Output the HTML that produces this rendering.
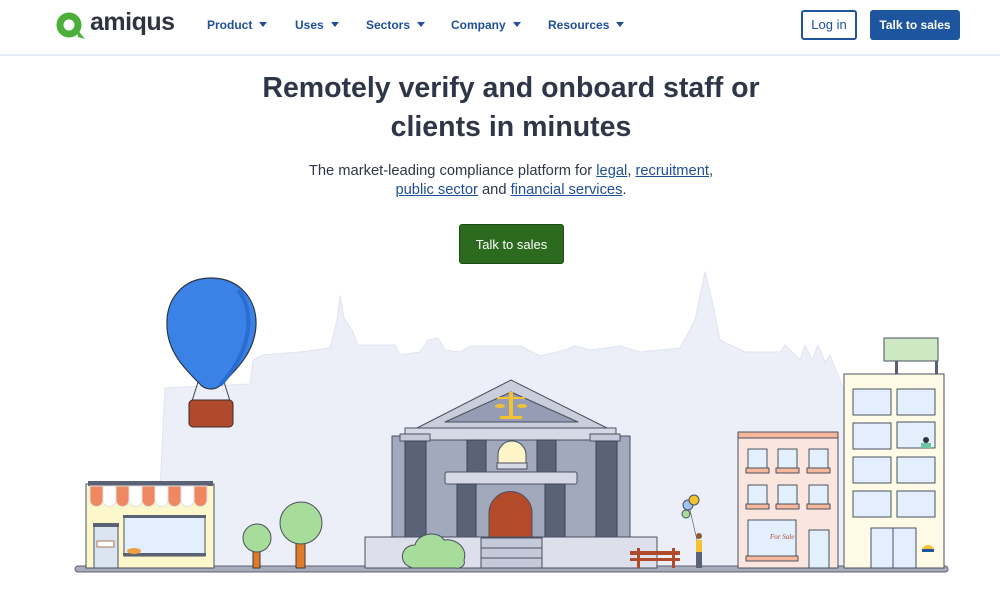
<!DOCTYPE html>
<html><head><meta charset="utf-8"><style>
*{margin:0;padding:0;box-sizing:border-box}
body{width:1000px;height:613px;overflow:hidden;background:#fff;font-family:"Liberation Sans",sans-serif;position:relative}
.hdr{position:absolute;left:0;top:0;width:1000px;height:56px;border-bottom:2px solid #e6edf7;background:#fff}
.nav{position:absolute;top:18px;font-size:12px;font-weight:bold;color:#1f4f99}
.nav i{display:inline-block;width:0;height:0;border-left:4px solid transparent;border-right:4px solid transparent;border-top:5px solid #1f4f99;margin-left:7px;vertical-align:2px}
.btn{position:absolute;font-size:12px;font-weight:bold;text-align:center;border-radius:3px}
h1{position:absolute;left:11px;width:1000px;top:69px;text-align:center;font-size:28.5px;line-height:39px;color:#2e3648;font-weight:bold}
.sub{position:absolute;left:11px;width:1000px;top:162px;text-align:center;font-size:14.7px;line-height:18.5px;color:#2e3648}
.sub a{color:#1f4f99;text-decoration:underline}
</style></head><body>
<div class="hdr">
<svg style="position:absolute;left:56px;top:11px" width="30" height="30" viewBox="0 0 30 30"><circle cx="13" cy="14" r="9" fill="none" stroke="#4caf3a" stroke-width="7"/><path d="M20 14 L22 26 L29 28 L24 22Z" fill="#4caf3a"/></svg>
<div style="position:absolute;left:90px;top:8px;font-size:25px;font-weight:bold;color:#2e3340;letter-spacing:-0.5px">amiqus</div>
<div class="nav" style="left:207px">Product<i></i></div>
<div class="nav" style="left:295px">Uses<i></i></div>
<div class="nav" style="left:366px">Sectors<i></i></div>
<div class="nav" style="left:451px">Company<i></i></div>
<div class="nav" style="left:548px">Resources<i></i></div>
<div class="btn" style="left:801px;top:10px;width:56px;height:30px;border:2px solid #1f559f;color:#1f4f99;line-height:26px;font-weight:normal;font-size:13px">Log in</div>
<div class="btn" style="left:870px;top:10px;width:90px;height:30px;background:#1e559f;color:#fff;line-height:30px">Talk to sales</div>
</div>
<h1>Remotely verify and onboard staff or<br>clients in minutes</h1>
<div class="sub">The market-leading compliance platform for <a>legal</a>, <a>recruitment</a>,<br><a>public sector</a> and <a>financial services</a>.</div>
<div class="btn" style="left:459px;top:224px;width:105px;height:40px;background:#2c6a1f;color:#fff;line-height:40px;font-size:13px;border:1px solid #1d4d14;font-weight:normal">Talk to sales</div>
<svg style="position:absolute;left:0;top:0" width="1000" height="613" viewBox="0 0 1000 613" stroke-linejoin="round">
<path d="M156 570 L165 388 L250 384 L253 360 L262 355 L300 352 L330 348 L337 320 L340 296 L344 318 L352 330 L358 345 L380 345 L395 345 L400 355 L420 352 L428 340 L438 338 L445 350 L460 352 L470 346 L520 346 L540 356 L565 350 L575 346 L590 350 L620 346 L640 352 L680 348 L695 320 L705 272 L712 300 L720 340 L745 352 L780 352 L785 345 L800 360 L805 345 L812 360 L818 345 L825 362 L830 355 L840 380 L858 430 L858 570Z" fill="#eceff8" stroke="#e0e4f0"/>
<rect x="75" y="566" width="873" height="6" rx="3" fill="#a6acba" stroke="#5b6170"/>
<line x1="198" y1="382" x2="192" y2="401" stroke="#444"/><line x1="224" y1="382" x2="230" y2="401" stroke="#444"/>
<path d="M211 278 C240 278 257 300 256 325 C255 352 236 370 222 384 C218 388 214 389 211 389 C206 389 202 387 199 383 C186 370 167 352 167 325 C166 300 182 278 211 278Z" fill="#3b82e6" stroke="#2d3545" stroke-width="1.2"/>
<path d="M238 290 C254 308 254 350 220 385" fill="none" stroke="#2a6cd0" stroke-width="4"/>
<rect x="189" y="400" width="44" height="27" rx="4" fill="#b04a2c" stroke="#3b2a26"/>
<rect x="86" y="484" width="128" height="84" fill="#fdf7cc" stroke="#4a5060"/>
<rect x="88" y="481" width="125" height="5" fill="#5b6273"/>
<g stroke="#e0e0e0">
<path d="M90 486h13v14a6.5 6.5 0 0 1-13 0z" fill="#ef8860"/><path d="M103 486h13v14a6.5 6.5 0 0 1-13 0z" fill="#fff"/>
<path d="M116 486h13v14a6.5 6.5 0 0 1-13 0z" fill="#ef8860"/><path d="M129 486h13v14a6.5 6.5 0 0 1-13 0z" fill="#fff"/>
<path d="M142 486h13v14a6.5 6.5 0 0 1-13 0z" fill="#ef8860"/><path d="M155 486h13v14a6.5 6.5 0 0 1-13 0z" fill="#fff"/>
<path d="M168 486h13v14a6.5 6.5 0 0 1-13 0z" fill="#ef8860"/><path d="M181 486h13v14a6.5 6.5 0 0 1-13 0z" fill="#fff"/>
<path d="M194 486h13v14a6.5 6.5 0 0 1-13 0z" fill="#ef8860"/></g>
<rect x="124" y="516" width="81" height="40" fill="#e3effc" stroke="#4a5060"/>
<rect x="123" y="515" width="83" height="3" fill="#5b6273"/><rect x="123" y="553" width="83" height="3" fill="#5b6273"/>
<rect x="94" y="525" width="24" height="43" fill="#dbe5f2" stroke="#4a5060"/><rect x="93" y="523" width="26" height="4" fill="#5b6273"/>
<rect x="97" y="541" width="17" height="6" fill="#fff" stroke="#b04a2c" stroke-width="0.8"/>
<ellipse cx="134" cy="551" rx="7" ry="3" fill="#f0a040"/>
<rect x="253" y="550" width="7" height="18" fill="#e07b2a" stroke="#3b3b3b"/>
<circle cx="257" cy="538" r="14" fill="#a8dc9a" stroke="#4a5060"/>
<rect x="296" y="542" width="9" height="26" fill="#e07b2a" stroke="#3b3b3b"/>
<ellipse cx="301" cy="523" rx="21" ry="21" fill="#a8dc9a" stroke="#4a5060"/>
<rect x="392" y="436" width="238" height="104" fill="#a3a9bd" stroke="#4a5060"/>
<path d="M511 380 L417 428 L607 428Z" fill="#c9cedd" stroke="#4a5060"/>
<path d="M511 392 L445 422 L578 422Z" fill="#959cb3" stroke="#4a5060"/>
<rect x="509" y="392" width="4" height="26" fill="#f2c230"/><rect x="500" y="416" width="22" height="3" fill="#f2c230"/>
<path d="M497 398h28" stroke="#f2c230" stroke-width="2"/><ellipse cx="500" cy="406" rx="5" ry="2" fill="#f2c230"/><ellipse cx="522" cy="406" rx="5" ry="2" fill="#f2c230"/>
<rect x="405" y="428" width="211" height="12" fill="#d5d9e6" stroke="#4a5060"/>
<rect x="400" y="434" width="30" height="7" fill="#c5cadb" stroke="#4a5060"/><rect x="590" y="434" width="30" height="7" fill="#c5cadb" stroke="#4a5060"/>
<rect x="405" y="441" width="21" height="96" fill="#5a6277" stroke="#3b4150"/><rect x="596" y="441" width="21" height="96" fill="#5a6277" stroke="#3b4150"/>
<rect x="467" y="440" width="19" height="32" fill="#5a6277" stroke="#3b4150"/><rect x="537" y="440" width="19" height="32" fill="#5a6277" stroke="#3b4150"/>
<path d="M498 465v-10a14 14 0 0 1 28 0v10z" fill="#fdf5c8" stroke="#4a5060"/><rect x="497" y="463" width="30" height="6" fill="#d5d9e6" stroke="#4a5060"/>
<rect x="445" y="472" width="132" height="12" rx="2" fill="#d5d9e6" stroke="#4a5060"/>
<rect x="457" y="484" width="19" height="56" fill="#5a6277" stroke="#3b4150"/><rect x="545" y="484" width="20" height="56" fill="#5a6277" stroke="#3b4150"/>
<path d="M489 540v-27a21.5 21.5 0 0 1 43 0v27z" fill="#b34a2a" stroke="#4a5060"/>
<rect x="365" y="537" width="292" height="31" fill="#dde0ea" stroke="#4a5060"/>
<rect x="481" y="538" width="61" height="30" fill="#c5cadb" stroke="#4a5060"/>
<path d="M481 548h61M481 558h61" stroke="#4a5060"/>
<path d="M408 566 C398 560 402 545 415 545 C418 533 438 530 444 540 C456 538 468 548 464 560 C466 566 460 569 455 568 L412 568Z" fill="#a8dc9a" stroke="#4a5060"/>
<rect x="630" y="551" width="50" height="4" fill="#b04a2c"/><rect x="630" y="558" width="50" height="3" fill="#b04a2c"/>
<rect x="637" y="548" width="3" height="20" fill="#b04a2c"/><rect x="672" y="548" width="3" height="20" fill="#b04a2c"/>
<path d="M690 510 L697 540" stroke="#555" stroke-width="0.6"/>
<circle cx="688" cy="505" r="5" fill="#9cc4f0" stroke="#4a5060"/><circle cx="694" cy="500" r="5" fill="#f2c230" stroke="#4a5060"/><circle cx="686" cy="514" r="4" fill="#a8dc9a" stroke="#4a5060"/>
<rect x="696" y="540" width="6" height="12" fill="#f2c230"/><rect x="696" y="552" width="6" height="16" fill="#5a6277"/><circle cx="699" cy="536" r="3" fill="#8a5a3a"/>
<rect x="738" y="436" width="100" height="132" fill="#fbe6df" stroke="#4a5060"/>
<rect x="738" y="432" width="100" height="6" fill="#f5b89a" stroke="#4a5060"/>
<g fill="#e3effc" stroke="#4a5060">
<rect x="748" y="449" width="19" height="21"/><rect x="778" y="449" width="19" height="21"/><rect x="809" y="449" width="19" height="21"/>
<rect x="748" y="485" width="19" height="21"/><rect x="778" y="485" width="19" height="21"/><rect x="809" y="485" width="19" height="21"/>
<rect x="748" y="520" width="48" height="38"/><rect x="809" y="530" width="20" height="38"/></g>
<g fill="#f5b89a" stroke="#4a5060"><rect x="746" y="468" width="23" height="5"/><rect x="776" y="468" width="23" height="5"/><rect x="807" y="468" width="23" height="5"/>
<rect x="746" y="504" width="23" height="5"/><rect x="776" y="504" width="23" height="5"/><rect x="807" y="504" width="23" height="5"/><rect x="746" y="556" width="52" height="5"/></g>
<text x="770" y="539" font-size="7" fill="#b04a2c" font-style="italic" font-family="Liberation Serif,serif">For Sale</text>
<rect x="895" y="360" width="3" height="15" fill="#5a6277"/><rect x="935" y="360" width="3" height="15" fill="#5a6277"/>
<rect x="884" y="338" width="54" height="23" fill="#cde8c2" stroke="#4a5060"/>
<rect x="844" y="374" width="100" height="194" fill="#fffbe6" stroke="#4a5060"/>
<g fill="#e3effc" stroke="#4a5060">
<rect x="853" y="389" width="38" height="26"/><rect x="897" y="389" width="38" height="26"/>
<rect x="853" y="423" width="38" height="26"/><rect x="897" y="422" width="38" height="26"/>
<rect x="853" y="457" width="38" height="26"/><rect x="897" y="457" width="38" height="26"/>
<rect x="853" y="491" width="38" height="26"/><rect x="897" y="491" width="38" height="26"/>
<rect x="871" y="528" width="45" height="40"/></g>
<path d="M893 528v40" stroke="#4a5060"/>
<circle cx="926" cy="440" r="3" fill="#2e3340"/><rect x="921" y="443" width="10" height="5" fill="#6cc6a0"/>
<path d="M922 551a6 6 0 0 1 12 0z" fill="#f2c230"/><rect x="922" y="549" width="12" height="3" fill="#1f559f"/>
</svg>
</body></html>
